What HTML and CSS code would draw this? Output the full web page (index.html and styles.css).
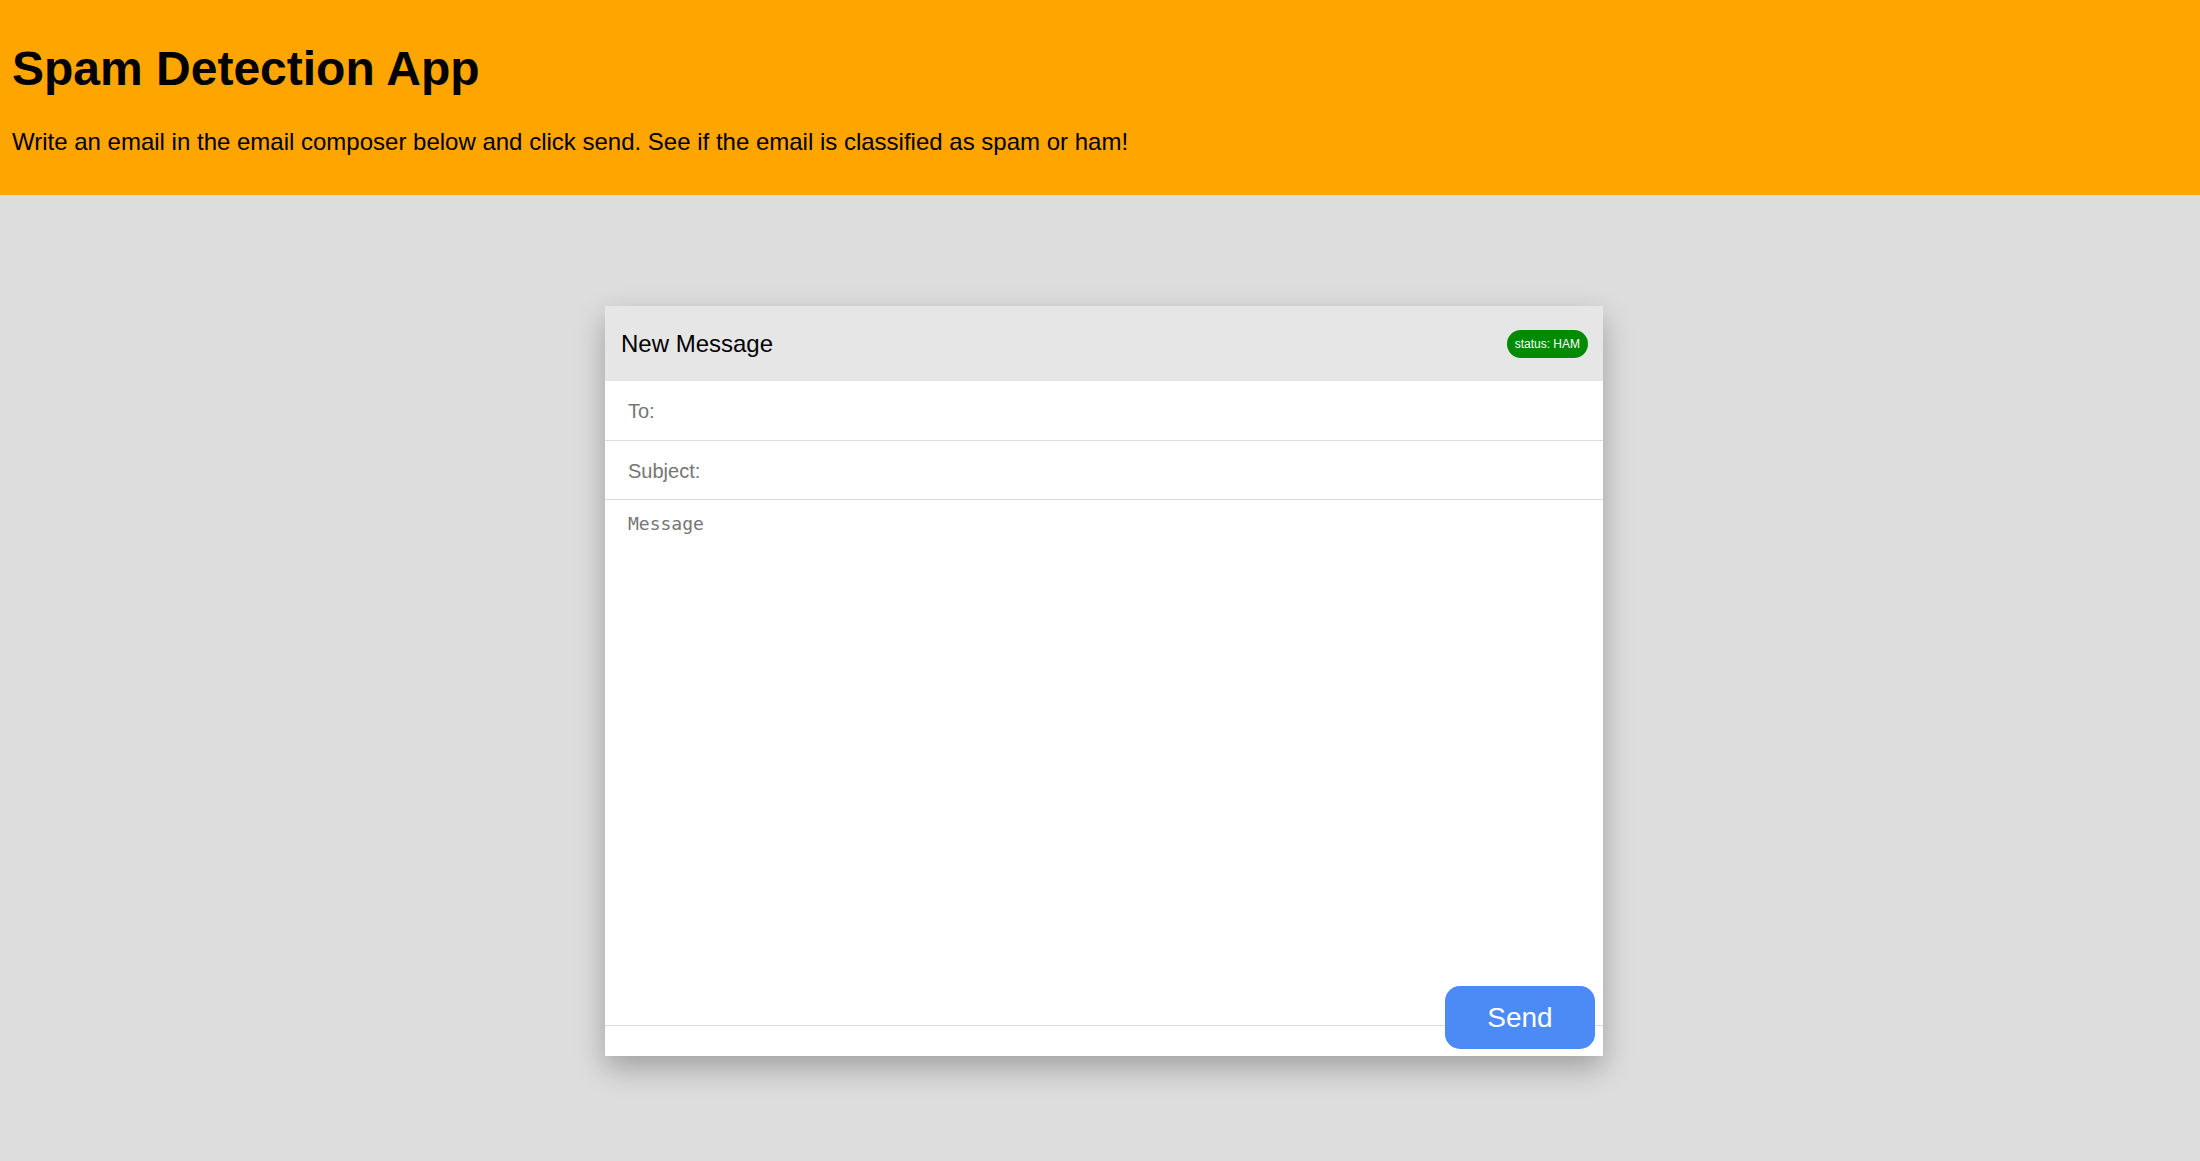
FILE: index.html
```html
<!DOCTYPE html>
<html lang="en">
<head>
<meta charset="utf-8">
<title>Spam Detection App</title>
<link rel="stylesheet" href="styles.css">
</head>
<body>
<header class="top">
  <h1 class="title">Spam Detection App</h1>
  <p class="intro">Write an email in the email composer below and click send. See if the email is classified as spam or ham!</p>
</header>
<main class="stage">
  <section class="composer">
    <div class="composer-head">
      <span class="composer-title">New Message</span>
      <span class="badge">status: HAM</span>
    </div>
    <div class="field field-first"><input class="field-input" type="text" placeholder="To:"></div>
    <div class="field"><input class="field-input" type="text" placeholder="Subject:"></div>
    <textarea class="message" placeholder="Message"></textarea>
    <div class="composer-foot">
      <button class="send" type="button">Send</button>
    </div>
  </section>
</main>
</body>
</html>
```

FILE: styles.css
```css
html, body {
  margin: 0;
  padding: 0;
}
body {
  background: #dddddd;
  font-family: "Liberation Sans", Arial, sans-serif;
  color: #000;
  min-height: 1161px;
}
.top {
  background: #ffa500;
  padding: 41px 12px 40px;
}
.title {
  margin: 0 0 32px;
  font-size: 48px;
  font-weight: bold;
  line-height: 55px;
}
.intro {
  margin: 0;
  font-size: 24px;
  line-height: 27px;
}
.stage {
  display: flex;
  justify-content: center;
  padding: 111px 0 0 8px;
}
.composer {
  position: relative;
  width: 998px;
  background: #fff;
  display: flex;
  flex-direction: column;
  box-shadow: 0 12px 28px rgba(0, 0, 0, 0.28);
}
.composer-head {
  height: 75px;
  background: #e6e6e6;
  display: flex;
  align-items: center;
  justify-content: space-between;
  padding: 0 15px 0 16px;
}
.composer-title {
  font-size: 24px;
}
.badge {
  background: #008a00;
  color: #fff;
  font-size: 12px;
  line-height: 14px;
  padding: 7px 8px;
  border-radius: 14px;
}
.field {
  box-sizing: border-box;
  height: 59px;
  padding-top: 2px;
  border-bottom: 1px solid #dcdcdc;
  display: flex;
  align-items: center;
}
.field-first {
  height: 60px;
}
.field-input {
  border: 0;
  outline: 0;
  width: 100%;
  padding: 0 23px;
  font-family: "Liberation Sans", Arial, sans-serif;
  font-size: 20px;
  background: transparent;
}
.field-input::placeholder {
  color: #757575;
}
.message {
  height: 526px;
  box-sizing: border-box;
  border: 0;
  border-bottom: 1px solid #dcdcdc;
  outline: 0;
  resize: none;
  padding: 13px 23px;
  font-family: "DejaVu Sans Mono", monospace;
  font-size: 18px;
  margin: 0;
  display: block;
}
.message::placeholder {
  color: #757575;
}
.composer-foot {
  height: 30px;
}
.send {
  position: absolute;
  right: 8px;
  bottom: 7px;
  width: 150px;
  height: 63px;
  border: 0;
  border-radius: 15px;
  background: #4c8bf5;
  color: #fff;
  font-family: "Liberation Sans", Arial, sans-serif;
  font-size: 28px;
  cursor: pointer;
}
```
